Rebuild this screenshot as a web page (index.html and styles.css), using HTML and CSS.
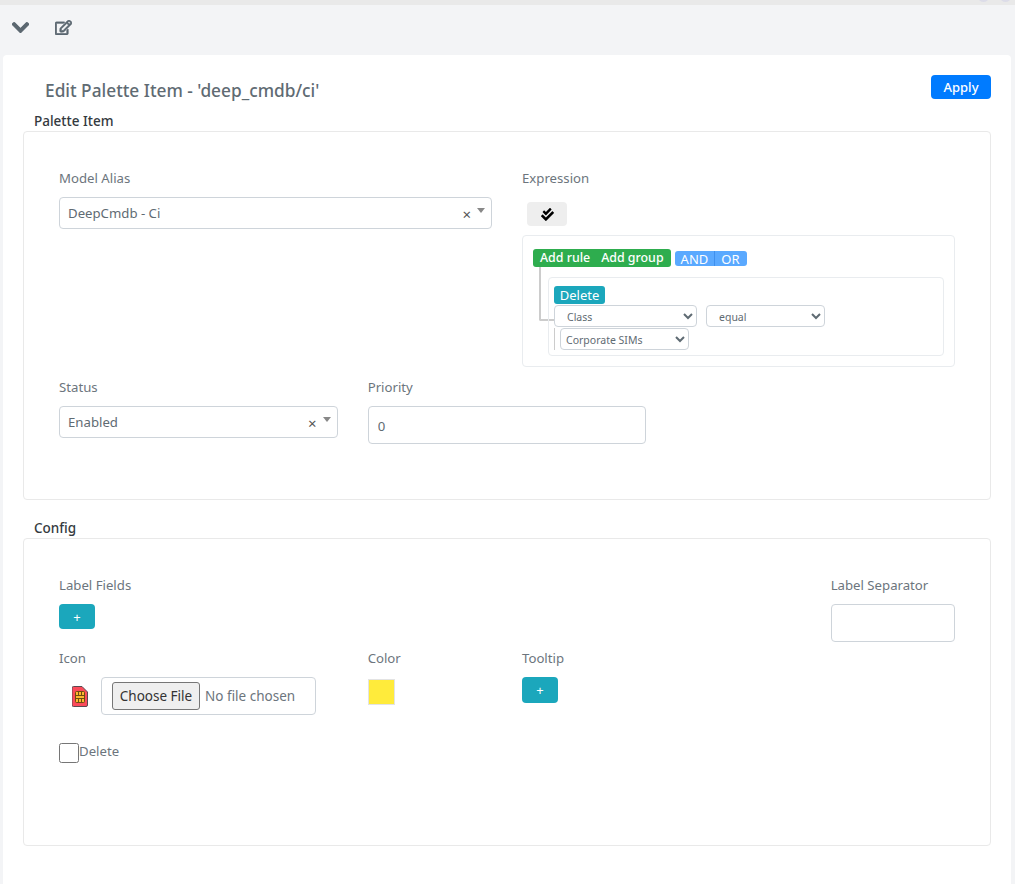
FILE: index.html
```html
<!DOCTYPE html>
<html lang="en">
<head>
    <meta charset="UTF-8">
    <meta name="viewport" content="width=device-width, initial-scale=1.0">
    <title>Edit Palette Item</title>
    <link rel="stylesheet" href="styles.css">
</head>
<body>
    <div class="top-strip">
        <span class="strip-dot"></span>
        <span class="strip-dot"></span>
    </div>
    <div class="tool-bar">
        <svg class="icon-chevron" viewBox="0 0 448 512"><path d="M207.029 381.476L12.686 187.132c-9.373-9.373-9.373-24.569 0-33.941l22.667-22.667c9.357-9.357 24.522-9.375 33.901-.04L224 284.505l154.745-154.021c9.379-9.335 24.544-9.317 33.901.04l22.667 22.667c9.373 9.373 9.373 24.569 0 33.941L240.971 381.476c-9.373 9.372-24.569 9.372-33.942 0z"/></svg>
        <svg class="icon-edit" viewBox="0 0 576 512"><path d="M402.3 344.9l32-32c5-5 13.7-1.5 13.7 5.7V464c0 26.5-21.5 48-48 48H48c-26.5 0-48-21.5-48-48V112c0-26.5 21.5-48 48-48h273.5c7.1 0 10.7 8.6 5.7 13.7l-32 32c-1.5 1.5-3.5 2.3-5.7 2.3H48v352h352V350.5c0-2.1.8-4.1 2.3-5.6zm156.6-201.8L296.3 405.7l-90.4 10c-26.2 2.9-48.5-19.2-45.6-45.6l10-90.4L432.9 17.1c22.9-22.9 59.9-22.9 82.7 0l43.2 43.2c22.9 22.9 22.9 60 .1 82.8zM460.1 174L402 115.9 216.2 301.8l-7.3 65.3 65.3-7.3L460.1 174zm64.8-79.7l-43.2-43.2c-4.1-4.1-10.8-4.1-14.8 0L436 82l58.1 58.1 30.9-30.9c4-4.2 4-10.8-.1-14.9z"/></svg>
    </div>

    <div class="main-card">
        <div class="card-head">
            <div class="page-title">Edit Palette Item - 'deep_cmdb/ci'</div>
            <button class="btn-apply">Apply</button>
        </div>

        <div class="section-title section-first">Palette Item</div>
        <div class="section-box palette-box">
            <div class="form-row">
                <div class="col-6">
                    <div class="field-label">Model Alias</div>
                    <div class="combo">
                        <span class="combo-text">DeepCmdb - Ci</span>
                        <span class="combo-clear">×</span>
                        <span class="combo-arrow"></span>
                    </div>
                </div>
                <div class="col-6">
                    <div class="field-label">Expression</div>
                    <button class="btn-check">
                        <svg class="icon-check" viewBox="0 0 512 512"><path d="M505 174.8l-39.6-39.6c-9.4-9.4-24.6-9.4-33.9 0L192 374.7 80.6 263.2c-9.4-9.4-24.6-9.4-33.9 0L7 302.9c-9.4 9.4-9.4 24.6 0 34L175 505c9.4 9.4 24.6 9.4 33.9 0l296-296.2c9.4-9.5 9.4-24.7.1-34zm-324.3 106c6.2 6.3 16.4 6.3 22.6 0l208-208.2c6.2-6.3 6.2-16.4 0-22.6L366.1 4.7c-6.2-6.3-16.4-6.3-22.6 0L192 156.2l-55.4-55.5c-6.2-6.3-16.4-6.3-22.6 0L68.7 146c-6.2 6.3-6.2 16.4 0 22.6l112 112.2z"/></svg>
                    </button>
                    <div class="query-box">
                        <div class="query-head">
                            <div class="add-group">
                                <span>Add rule</span>
                                <span>Add group</span>
                            </div>
                            <div class="and-or">
                                <span class="and-btn">AND</span>
                                <span class="or-btn">OR</span>
                            </div>
                        </div>
                        <div class="rule-box">
                            <span class="btn-delete">Delete</span>
                            <div class="rule-line">
                                <select class="rule-select select-class"><option>Class</option></select>
                                <select class="rule-select select-equal"><option>equal</option></select>
                            </div>
                            <div class="rule-value">
                                <select class="rule-select select-value"><option>Corporate SIMs</option></select>
                            </div>
                        </div>
                    </div>
                </div>
            </div>
            <div class="form-row status-row">
                <div class="col-4">
                    <div class="field-label">Status</div>
                    <div class="combo">
                        <span class="combo-text">Enabled</span>
                        <span class="combo-clear">×</span>
                        <span class="combo-arrow"></span>
                    </div>
                </div>
                <div class="col-4">
                    <div class="field-label">Priority</div>
                    <input class="text-input" type="text" value="0">
                </div>
            </div>
        </div>

        <div class="section-title">Config</div>
        <div class="section-box config-box">
            <div class="form-row">
                <div class="col-10">
                    <div class="field-label">Label Fields</div>
                    <button class="btn-plus">+</button>
                </div>
                <div class="col-2">
                    <div class="field-label">Label Separator</div>
                    <input class="text-input" type="text">
                </div>
            </div>
            <div class="form-row icon-row">
                <div class="col-4">
                    <div class="field-label">Icon</div>
                    <div class="icon-field">
                        <svg class="icon-sim" viewBox="0 0 16 21">
                            <path d="M1.5.5h8.5l5.500 5.500v13a1.500 1.500 0 0 1-1.500 1.500h-12.500a1.500 1.500 0 0 1-1.500-1.500v-17a1.500 1.500 0 0 1 1.500-1.500z" fill="#fb4a5a" stroke="#5a4a50"/>
                            <rect x="3.500" y="5.500" width="9" height="11" rx="1" fill="#fdb92e" stroke="#6e4c10"/>
                            <path d="M3.500 9.500h9M3.500 12.500h9M6.500 5.500v4M9.500 5.500v4M6.500 12.500v4M9.500 12.500v4" stroke="#6e4c10" fill="none"/>
                        </svg>
                        <div class="file-box"><input class="file-input" type="file"></div>
                    </div>
                </div>
                <div class="col-2">
                    <div class="field-label">Color</div>
                    <span class="color-swatch"></span>
                </div>
                <div class="col-2">
                    <div class="field-label">Tooltip</div>
                    <button class="btn-plus btn-tooltip">+</button>
                </div>
            </div>
            <label class="delete-row">
                <input class="delete-check" type="checkbox">
                <span>Delete</span>
            </label>
        </div>
    </div>
</body>
</html>
```

FILE: styles.css
```css
* {
    box-sizing: border-box;
}
html, body {
    height: 100%;
}
body {
    margin: 0;
    background-color: #f3f4f6;
    color: #6c757d;
    font-family: "Noto Sans", "Open Sans", sans-serif;
    font-size: 13px;
    overflow: hidden;
}
button {
    font-family: inherit;
    border: none;
    cursor: pointer;
}

.top-strip {
    height: 5px;
    background-color: #e9e9e9;
    display: flex;
    justify-content: flex-end;
    gap: 11px;
    padding-right: 4px;
    overflow: hidden;
}
.strip-dot {
    width: 11px;
    height: 11px;
    margin-top: -9px;
    border-radius: 50%;
    background-color: #dcdce8;
}

.tool-bar {
    height: 50px;
    display: flex;
    align-items: center;
    padding: 0 0 5px 12px;
    gap: 26px;
    fill: #5b6770;
    stroke: #5b6770;
}
.icon-chevron {
    width: 17px;
    height: 19px;
    stroke-width: 30;
}
.icon-edit {
    width: 17px;
    height: 15px;
    stroke-width: 25;
}

.main-card {
    margin: 0 4px 0 3px;
    height: 829px;
    background-color: #fff;
    border-radius: 4px 4px 0 0;
    padding: 20px 20px 0;
}
.card-head {
    display: flex;
    justify-content: space-between;
    height: 36px;
}
.page-title {
    padding: 3px 0 0 22px;
    font-size: 17.300px;
    font-weight: 500;
    line-height: 26px;
    color: #5f6b73;
}
.btn-apply {
    width: 60px;
    height: 24px;
    background-color: #007bff;
    color: #fff;
    border-radius: 4px;
    font-size: 13px;
    font-weight: 500;
    padding: 0;
}

.section-title {
    height: 20px;
    padding-left: 11px;
    font-size: 13.500px;
    font-weight: 500;
    line-height: 20px;
    color: #343a40;
}
.section-box {
    border: 1px solid #e9e9e9;
    border-radius: 4px;
    padding: 36px 35px 0;
    margin-bottom: 18px;
}
.palette-box {
    height: 369px;
}
.config-box {
    height: 308px;
}

.form-row {
    display: grid;
    grid-template-columns: repeat(12, 1fr);
    column-gap: 30px;
}
.col-2 { grid-column: span 2; }
.col-4 { grid-column: span 4; }
.col-6 { grid-column: span 6; }
.col-10 { grid-column: span 10; }
.status-row {
    margin-top: 10px;
}
.icon-row {
    margin-top: 6px;
}

.field-label {
    height: 21px;
    margin-bottom: 8px;
    line-height: 21px;
    font-size: 13.200px;
}

.combo {
    height: 32px;
    display: flex;
    align-items: center;
    border: 1px solid #ced4da;
    border-radius: 4px;
    padding: 0 6px 0 8px;
    color: #5f6b73;
    font-size: 13.200px;
}
.combo-text {
    flex: 1;
}
.combo-clear {
    margin: 2px 6px 0 0;
    font-size: 15px;
    line-height: 1;
    color: #555;
}
.combo-arrow {
    margin-bottom: 5px;
    border-top: 5px solid #888;
    border-left: 4px solid transparent;
    border-right: 4px solid transparent;
}

.btn-check {
    display: block;
    width: 40px;
    height: 24px;
    margin: 13px 0 9px 5px;
    background-color: #eee;
    border-radius: 4px;
    padding: 0;
}
.icon-check {
    display: block;
    width: 13px;
    height: 13px;
    margin: 0 auto;
}

.query-box {
    height: 132px;
    border: 1px solid #e9ecef;
    border-radius: 4px;
    padding: 13px 10px 0;
    position: relative;
}
.query-box::before {
    content: "";
    position: absolute;
    left: 16px;
    top: 31px;
    width: 15px;
    height: 52px;
    border-left: 2px solid #ccc;
    border-bottom: 2px solid #ccc;
    border-bottom-left-radius: 2px;
}
.query-head {
    display: flex;
    align-items: flex-end;
    gap: 4px;
    color: #fff;
    font-size: 13px;
}
.add-group {
    height: 18px;
    display: flex;
    gap: 11px;
    align-items: center;
    padding: 0 7px;
    background-color: #2ead4e;
    border-radius: 3px;
    font-size: 12.400px;
    font-weight: 500;
    line-height: 18px;
}
.and-or {
    height: 15px;
    display: flex;
    margin-bottom: 1px;
    line-height: 16px;
}
.and-btn, .or-btn {
    background-color: #5aa9ff;
    padding: 0 6px;
}
.and-btn {
    border-radius: 3px 0 0 3px;
    border-right: 1px solid #3f90ee;
}
.or-btn {
    border-radius: 0 3px 3px 0;
    padding-right: 7px;
}

.rule-box {
    height: 79px;
    margin: 10px 0 0 15px;
    border: 1px solid #e9ecef;
    border-radius: 4px;
    padding: 8px 5px 0;
    position: relative;
    width: 396px;
}
.btn-delete {
    display: block;
    width: 51px;
    height: 18px;
    margin-bottom: 1px;
    background-color: #1ba7bc;
    border-radius: 3px;
    color: #fff;
    font-size: 13px;
    line-height: 18px;
    text-align: center;
}
.rule-line {
    display: flex;
    gap: 9px;
}
.rule-value {
    margin-top: 1px;
    padding-left: 5px;
    border-left: 1px solid #ccc;
    height: 22px;
}
.rule-select {
    display: block;
    height: 22px;
    border: 1px solid #ced4da;
    border-radius: 4px;
    background-color: #fff;
    color: #5f6b73;
    font-family: inherit;
    font-size: 10.500px;
    padding-top: 2px;
}
.select-class {
    width: 143px;
    padding-left: 8px;
}
.select-equal {
    width: 119px;
    padding-left: 8px;
}
.select-value {
    width: 129px;
    padding-left: 1px;
}

.text-input {
    display: block;
    width: 100%;
    height: 38px;
    border: 1px solid #ced4da;
    border-radius: 4px;
    padding: 1px 9px 0;
    color: #5f6b73;
    font-family: inherit;
    font-size: 13.200px;
}

.btn-plus {
    display: block;
    width: 36px;
    height: 25px;
    background-color: #1ba7bc;
    color: #fff;
    border-radius: 4px;
    font-size: 13px;
    padding: 0;
}
.btn-tooltip {
    height: 26px;
}

.icon-field {
    display: flex;
    align-items: center;
    padding-left: 13px;
}
.icon-sim {
    width: 16px;
    height: 21px;
    margin: 0 13px 0 0;
}
.file-box {
    width: 215px;
    height: 38px;
    display: flex;
    align-items: center;
    border: 1px solid #ced4da;
    border-radius: 4px;
    padding-left: 10px;
}
.file-input {
    font-family: inherit;
    font-size: 13.500px;
    color: #6c757d;
}
.file-input::file-selector-button {
    width: 88px;
    height: 28px;
    margin-right: 5px;
    padding: 0;
    background-color: #efefef;
    border: 1px solid #767676;
    border-radius: 3px;
    color: #333;
    font-family: inherit;
    font-size: 13.500px;
}
.color-swatch {
    display: block;
    width: 27px;
    height: 26px;
    margin-top: 10px;
    background-color: #ffeb3b;
    border: 1px solid #e3e3e3;
}

.delete-row {
    display: flex;
    margin-top: 28px;
    line-height: 17px;
    font-size: 13.200px;
}
.delete-check {
    width: 20px;
    height: 20px;
    margin: 0;
}
```
